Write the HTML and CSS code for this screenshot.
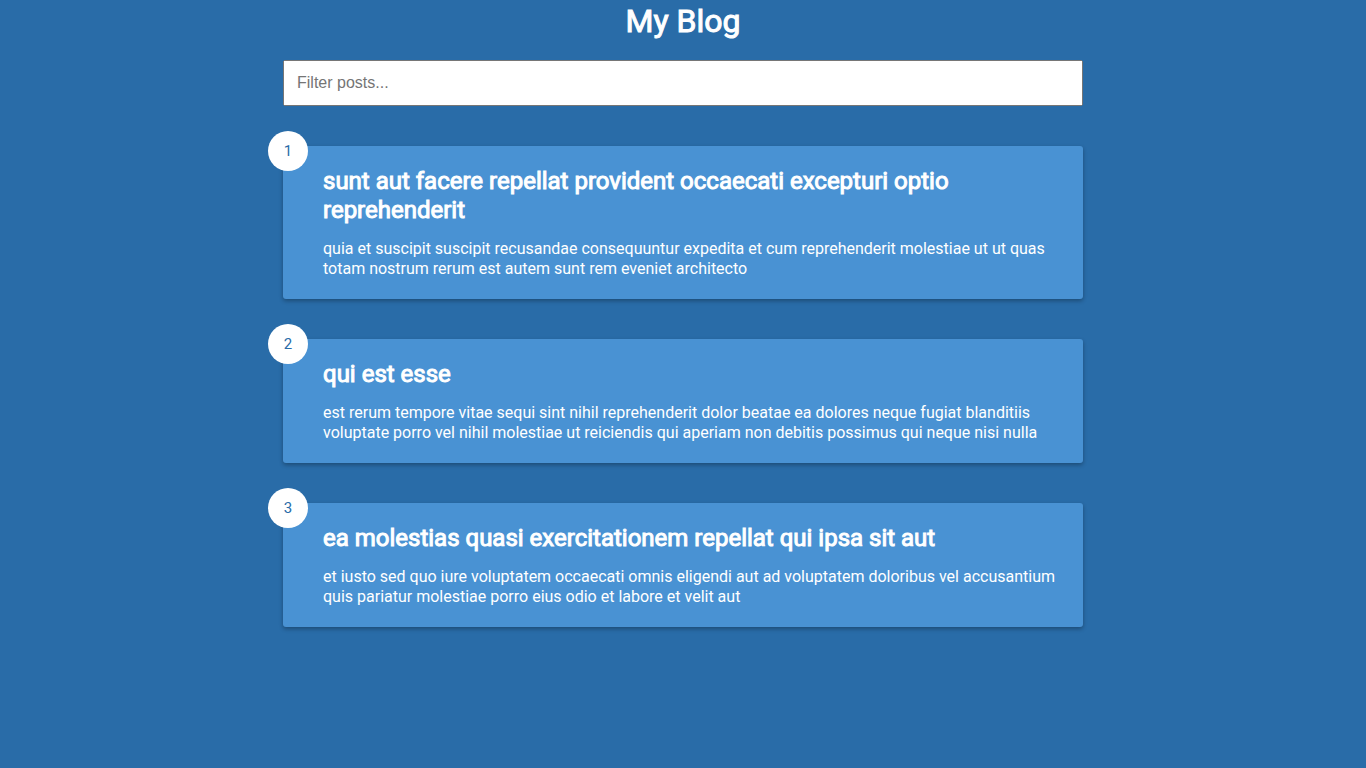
FILE: index.html
```html
<!DOCTYPE html>
<html lang="en">
<head>
  <meta charset="utf-8">
  <meta name="viewport" content="width=device-width, initial-scale=1">
  <title>My Blog</title>
  <link rel="stylesheet" href="styles.css">
</head>
<body>
  <h1>My Blog</h1>
  <div class="filter-container">
    <input type="text" id="filter" class="filter" placeholder="Filter posts..." aria-label="Filter posts">
  </div>
  <main class="posts">
    <article class="post">
      <div class="number">1</div>
      <h2 class="post-title">sunt aut facere repellat provident occaecati excepturi optio reprehenderit</h2>
      <p class="post-body">quia et suscipit suscipit recusandae consequuntur expedita et cum reprehenderit molestiae ut ut quas totam nostrum rerum est autem sunt rem eveniet architecto</p>
    </article>
    <article class="post">
      <div class="number">2</div>
      <h2 class="post-title">qui est esse</h2>
      <p class="post-body">est rerum tempore vitae sequi sint nihil reprehenderit dolor beatae ea dolores neque fugiat blanditiis voluptate porro vel nihil molestiae ut reiciendis qui aperiam non debitis possimus qui neque nisi nulla</p>
    </article>
    <article class="post">
      <div class="number">3</div>
      <h2 class="post-title">ea molestias quasi exercitationem repellat qui ipsa sit aut</h2>
      <p class="post-body">et iusto sed quo iure voluptatem occaecati omnis eligendi aut ad voluptatem doloribus vel accusantium quis pariatur molestiae porro eius odio et labore et velit aut</p>
    </article>
  </main>
</body>
</html>
```
FILE: styles.css
```css
* {
  box-sizing: border-box;
}

body {
  margin: 0;
  min-height: 100vh;
  padding-bottom: 100px;
  display: flex;
  flex-direction: column;
  align-items: center;
  background-color: #296ca8;
  color: #fff;
  font-family: Roboto, "Liberation Sans", sans-serif;
}

h1,
h2 {
  font-weight: 400;
  -webkit-text-stroke: 1px currentColor;
}

h1 {
  margin: 2px 0 20px;
  font-size: 32px;
  line-height: 38px;
  text-align: center;
}

.filter-container {
  width: 80vw;
  max-width: 800px;
}

.filter {
  display: block;
  width: 100%;
  padding: 12px;
  font-family: "Liberation Sans", Arial, sans-serif;
  font-size: 16px;
}

.posts {
  width: 80vw;
  max-width: 800px;
}

.post {
  position: relative;
  margin: 40px 0;
  padding: 21px 20px 20px 40px;
  border-radius: 3px;
  background-color: #4992d3;
  box-shadow: 0 2px 4px rgba(0, 0, 0, 0.3);
}

.post-title {
  margin: 0;
  font-size: 24px;
  line-height: 29px;
}

.post-body {
  margin: 14px 0 0;
  font-size: 16px;
  line-height: 20px;
}

.number {
  position: absolute;
  top: -15px;
  left: -15px;
  width: 40px;
  height: 40px;
  display: flex;
  align-items: center;
  justify-content: center;
  border-radius: 50%;
  background-color: #fff;
  color: #296ca8;
  font-size: 15px;
}
```
